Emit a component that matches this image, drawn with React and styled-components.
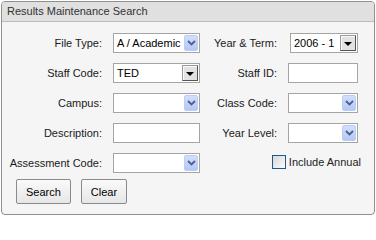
import React from "react";
import styled, { createGlobalStyle } from "styled-components";

const GlobalStyle = createGlobalStyle`
  body {
    margin: 0;
    background: #fff;
    font-family: "Liberation Sans", Arial, sans-serif;
    font-size: 11px;
    color: #1a1a1a;
  }
`;

const Panel = styled.div`
  margin: 1px 0 0 1px;
  width: 374px;
  height: 214px;
  box-sizing: border-box;
  border: 1px solid #8f8f8f;
  border-radius: 4px;
  background: #f5f5f5;
  overflow: hidden;
`;

const Header = styled.div`
  height: 19px;
  line-height: 19px;
  padding-left: 5px;
  background: #e0e0e0;
  border-bottom: 1px solid #bdbdbd;
  color: #333;
  font-size: 11px;
`;

const Body = styled.div`
  padding: 11px 0 0 6px;
`;

const Grid = styled.div`
  display: grid;
  grid-template-columns: 105px 87px 88px 73px;
  grid-auto-rows: 20px;
  row-gap: 10px;
  align-items: center;
`;

const Label = styled.label`
  text-align: right;
  padding-right: 11px;
  white-space: nowrap;
`;

const Input = styled.input`
  width: ${(p) => p.$w || 70}px;
  height: 20px;
  box-sizing: border-box;
  border: 1px solid #a5a5a5;
  background: #fff;
  padding: 0 3px;
  font: inherit;
  outline: none;
`;

const SelectBox = styled.div`
  width: ${(p) => p.$w || 87}px;
  height: 20px;
  margin-left: ${(p) => p.$inset || 0}px;
  box-sizing: border-box;
  border: 1px solid #a5a5a5;
  background: #fff;
  display: flex;
  align-items: center;
  padding: 1px;
`;

const Value = styled.span`
  flex: 1;
  padding-left: 2px;
  color: #000;
  font-size: 11px;
  white-space: nowrap;
  overflow: hidden;
`;

const XpArrow = styled.span`
  width: 14px;
  height: 16px;
  box-sizing: border-box;
  border: 1px solid #bccdf3;
  border-radius: 2px;
  background: linear-gradient(#d2defd, #b4c8f7);
  display: flex;
  align-items: center;
  justify-content: center;
`;

const ClassicArrow = styled.span`
  width: 16px;
  height: 16px;
  box-sizing: border-box;
  border: 1px solid;
  border-color: #9a9a9a #555 #555 #9a9a9a;
  box-shadow: inset 1px 1px 0 #fafafa;
  background: #e2e2e2;
  display: flex;
  align-items: center;
  justify-content: center;
  &::after {
    content: "";
    border-left: 4px solid transparent;
    border-right: 4px solid transparent;
    border-top: 4px solid #000;
    margin-top: 1px;
  }
`;

const Chevron = () => (
  <svg width="9" height="6" viewBox="0 0 9 6">
    <path d="M1 1 L4.5 4.5 L8 1" fill="none" stroke="#4d6185" strokeWidth="1.8" />
  </svg>
);

const Select = ({ value, classic, w, inset }) => (
  <SelectBox $w={w} $inset={inset}>
    <Value>{value}</Value>
    {classic ? <ClassicArrow /> : (
      <XpArrow>
        <Chevron />
      </XpArrow>
    )}
  </SelectBox>
);

const CheckCell = styled.label`
  grid-column: 3 / 5;
  display: flex;
  justify-content: flex-end;
  align-items: center;
  gap: 3px;
  font-size: 11px;
  color: #222;
  margin-top: -3px;
`;

const CheckBox = styled.span`
  width: 14px;
  height: 14px;
  box-sizing: border-box;
  border: 1px solid #1c5a8e;
  background: linear-gradient(135deg, #d8d8d8, #fbfbfb);
`;

const ButtonRow = styled.div`
  display: flex;
  gap: 10px;
  margin: 6px 0 0 8px;
`;

const Button = styled.button`
  height: 25px;
  padding: 0 9px;
  border: 1px solid #8a8a8a;
  border-radius: 2px;
  background: linear-gradient(#fafafa, #e6e6e6);
  font-family: "Liberation Sans", Arial, sans-serif;
  font-size: 11px;
  color: #000;
`;

export default function App() {
  return (
    <>
      <GlobalStyle />
      <Panel>
        <Header>Results Maintenance Search</Header>
        <Body>
          <Grid>
            <Label>File Type:</Label>
            <Select value="A / Academic" />
            <Label>Year &amp; Term:</Label>
            <Select value="2006 - 1" classic w={68} inset={2} />

            <Label>Staff Code:</Label>
            <Select value="TED" classic />
            <Label>Staff ID:</Label>
            <Input />

            <Label>Campus:</Label>
            <Select value="" />
            <Label>Class Code:</Label>
            <Select value="" w={70} />

            <Label>Description:</Label>
            <Input $w={87} />
            <Label>Year Level:</Label>
            <Select value="" w={70} />

            <Label>Assessment Code:</Label>
            <Select value="" />
            <CheckCell>
              <CheckBox />
              Include Annual
            </CheckCell>
          </Grid>
          <ButtonRow>
            <Button>Search</Button>
            <Button>Clear</Button>
          </ButtonRow>
        </Body>
      </Panel>
    </>
  );
}
